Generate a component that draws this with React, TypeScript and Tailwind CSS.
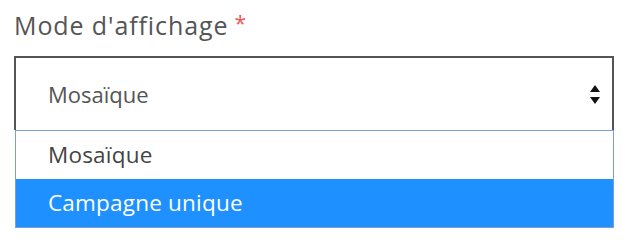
const ArrowIcon = () => (
  <svg width="10" height="19" viewBox="0 0 10 19" className="shrink-0">
    <path d="M5 0 L10 7 L0 7 Z" fill="#111" />
    <path d="M0 12 L10 12 L5 19 Z" fill="#111" />
  </svg>
)

export default function App() {
  const options = ['Mosaïque', 'Campagne unique']
  const selected = 1

  return (
    <div className="h-[229px] w-[636px] bg-white font-['Open_Sans','Lato',sans-serif]">
      <div className="flex flex-col px-[14px] pt-[9px]">
        <label className="flex items-start text-[25px] leading-[33px] tracking-[0.9px] text-[#555]">
          Mode d'affichage
          <span className="ml-[6px] mt-[2px] text-[21px] leading-[24px] text-[#f05555]">*</span>
        </label>

        <div className="mt-[14px] flex h-[74px] w-[600px] items-center justify-between border-x-2 border-t-2 border-[#555] pl-[32px] pr-[12px]">
          <span className="text-[22px] text-[#555]">Mosaïque</span>
          <ArrowIcon />
        </div>

        <ul className="ml-px w-[599px] border border-[#7b9ddb] bg-white">
          {options.map((opt, i) => (
            <li
              key={opt}
              className={`flex h-[48px] items-center pl-[32px] text-[22.5px] tracking-[0.2px] ${
                i === selected ? 'bg-[#1e90ff] text-white' : 'text-[#444]'
              }`}
            >
              {opt}
            </li>
          ))}
        </ul>
      </div>
    </div>
  )
}
